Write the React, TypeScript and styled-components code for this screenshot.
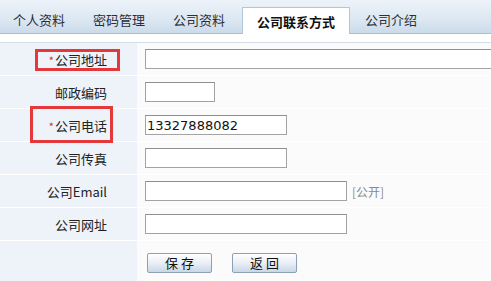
import styled, { createGlobalStyle } from 'styled-components';

const GlobalStyle = createGlobalStyle`
  html, body {
    margin: 0;
    padding: 0;
    background: #ffffff;
  }
  body {
    font-family: "Noto Sans CJK SC", "DejaVu Sans", sans-serif;
    font-size: 13px;
    color: #222;
  }
`;

const tabs = ['个人资料', '密码管理', '公司资料', '公司联系方式', '公司介绍'];
const activeTab = 3;

interface Field {
  label: string;
  required?: boolean;
  width: number;
  value?: string;
  note?: string;
}

const fields: Field[] = [
  { label: '公司地址', required: true, width: 400 },
  { label: '邮政编码', width: 70 },
  { label: '公司电话', required: true, width: 142, value: '13327888082' },
  { label: '公司传真', width: 142 },
  { label: '公司Email', width: 202, note: '[公开]' },
  { label: '公司网址', width: 202 },
];

export default function App() {
  return (
    <Page>
      <GlobalStyle />
      <TabBar>
        {tabs.map((t, i) => (
          <Tab key={t} $active={i === activeTab}>
            {t}
          </Tab>
        ))}
      </TabBar>
      <Divider />
      <Form>
        {fields.map((f) => (
          <Row key={f.label}>
            <LabelCell>
              {f.required && <Star>*</Star>}
              {f.label}
            </LabelCell>
            <InputCell>
              <TextInput style={{ width: f.width }} defaultValue={f.value} />
              {f.note && <Note>{f.note}</Note>}
            </InputCell>
          </Row>
        ))}
        <Row $last>
          <LabelCell />
          <ButtonCell>
            <Button>保 存</Button>
            <Button>返 回</Button>
          </ButtonCell>
        </Row>
        <Mark $top={6} $left={35} $w={85} $h={22} />
        <Mark $top={63} $left={30} $w={83} $h={37} />
      </Form>
    </Page>
  );
}

const Page = styled.div`
  width: 491px;
  height: 281px;
  overflow: hidden;
  background: #fbfbfb;
`;

const TabBar = styled.div`
  display: flex;
  align-items: flex-end;
  gap: 2px;
  height: 33px;
  background: linear-gradient(to bottom, #edf3f9 0%, #dce7f2 60%, #cbdbea 100%);
  border-bottom: 1px solid #a9bdd2;
`;

const Tab = styled.div<{ $active?: boolean }>`
  display: flex;
  align-items: center;
  justify-content: center;
  box-sizing: border-box;
  width: ${(p) => (p.$active ? '108px' : '78px')};
  height: ${(p) => (p.$active ? '27px' : '28px')};
  margin-left: ${(p) => (p.$active ? '2px' : '0')};
  margin-bottom: ${(p) => (p.$active ? '-1px' : '0')};
  padding-top: ${(p) => (p.$active ? '1px' : '0')};
  font-size: 13px;
  font-weight: ${(p) => (p.$active ? 700 : 400)};
  color: ${(p) => (p.$active ? '#111' : '#2a2f36')};
  background: ${(p) => (p.$active ? '#ffffff' : 'transparent')};
  border: ${(p) => (p.$active ? '1px solid #b3c5d8' : 'none')};
  border-bottom: none;
`;

const Divider = styled.div`
  height: 8px;
  background: #ffffff;
  border-bottom: 1px solid #d5dde6;
`;

const Form = styled.div`
  position: relative;
`;

const Row = styled.div<{ $last?: boolean }>`
  display: grid;
  grid-template-columns: 137px 1fr;
  height: ${(p) => (p.$last ? '40px' : '32px')};
  border-bottom: ${(p) => (p.$last ? 'none' : '1px solid #ffffff')};
`;

const LabelCell = styled.div`
  display: flex;
  align-items: center;
  justify-content: flex-end;
  padding-right: 30px;
  background: #eef3f9;
  font-size: 13px;
  color: #222;
  white-space: nowrap;
`;

const Star = styled.span`
  color: #e0262b;
  font-size: 11px;
  align-self: flex-start;
  margin-top: 9px;
  margin-right: 1px;
`;

const InputCell = styled.div`
  display: flex;
  align-items: center;
  padding-left: 8px;
  background: #fbfbfb;
  white-space: nowrap;
`;

const TextInput = styled.input`
  box-sizing: border-box;
  flex: none;
  height: 20px;
  padding: 0 1px;
  border: 1px solid #a3a3a3;
  border-top-color: #8f8f8f;
  background: #ffffff;
  font-family: "DejaVu Sans", "Noto Sans CJK SC", sans-serif;
  font-size: 13px;
  color: #111;
  outline: none;
`;

const Note = styled.span`
  margin-left: 5px;
  font-size: 12px;
  color: #8a8a8a;
`;

const ButtonCell = styled.div`
  display: flex;
  align-items: flex-start;
  gap: 20px;
  padding: 12px 0 0 10px;
  background: #fbfbfb;
`;

const Button = styled.button`
  box-sizing: border-box;
  width: 65px;
  height: 20px;
  padding: 0;
  border: 1px solid #8ea0b4;
  border-radius: 2px;
  background: linear-gradient(to bottom, #ffffff 0%, #e9eff6 50%, #c9d7e6 100%);
  font-family: "Noto Sans CJK SC", sans-serif;
  font-size: 13px;
  line-height: 18px;
  color: #111;
`;

const Mark = styled.div<{ $top: number; $left: number; $w: number; $h: number }>`
  position: absolute;
  top: ${(p) => p.$top}px;
  left: ${(p) => p.$left}px;
  width: ${(p) => p.$w}px;
  height: ${(p) => p.$h}px;
  box-sizing: border-box;
  border: 3px solid #e5383b;
  pointer-events: none;
`;
